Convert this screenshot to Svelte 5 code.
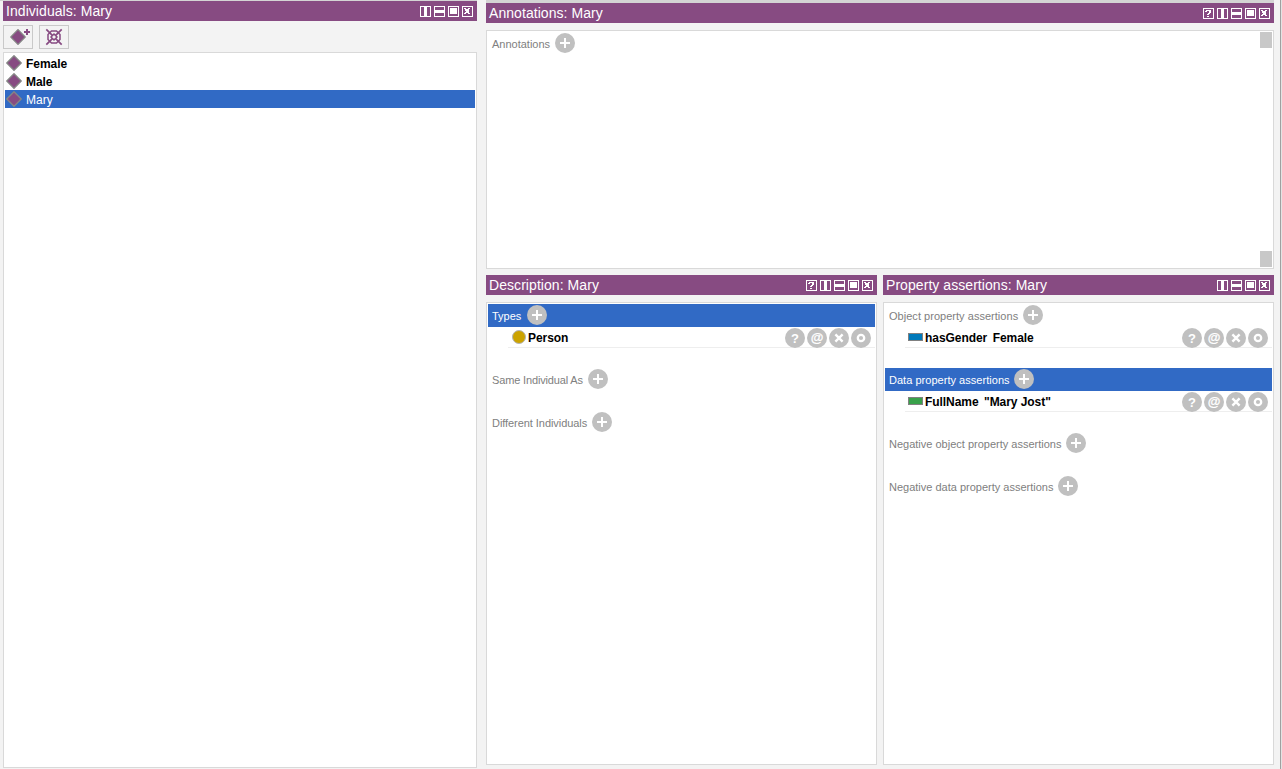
<script>
  const people = [
    { name: 'Female', bold: true },
    { name: 'Male', bold: true },
    { name: 'Mary', selected: true }
  ];
  const description = [
    { label: 'Types', width: 35, selected: true, item: { kind: 'class', name: 'Person' } },
    { label: 'Same Individual As', width: 96, spacing: -0.15 },
    { label: 'Different Individuals', width: 100, spacing: -0.06 }
  ];
  const assertions = [
    { label: 'Object property assertions', width: 134, spacing: 0.03, item: { kind: 'object', name: 'hasGender', value: 'Female' } },
    { label: 'Data property assertions', width: 125, spacing: 0.03, selected: true, item: { kind: 'data', name: 'FullName', value: '"Mary Jost"' } },
    { label: 'Negative object property assertions', width: 177 },
    { label: 'Negative data property assertions', width: 169 }
  ];
</script>

{#snippet header(title, help)}
  <header>
    <h2>{title}</h2>
    <div class="controls">
      {#each help ? ['help', 'cols', 'rows', 'max', 'close'] : ['cols', 'rows', 'max', 'close'] as kind}
        <svg width="11" height="11" viewBox="0 0 11 11" shape-rendering="crispEdges">
          <rect x=".5" y=".5" width="10" height="10" fill="none" stroke="#fff" />
          {#if kind === 'help'}
            <path d="M3 2h5v1h-5zM2 3h2v1h-2zM6 3h2v2h-2zM5 5h2v1h-2zM4 6h2v1h-2zM4 8h2v1h-2z" fill="#fff" />
          {:else if kind === 'cols'}
            <rect x="4" y="1" width="3" height="9" fill="#fff" />
          {:else if kind === 'rows'}
            <rect x="1" y="4" width="9" height="3" fill="#fff" />
          {:else if kind === 'max'}
            <rect x="2" y="2" width="7" height="6" fill="#fff" />
          {:else}
            <path d="M2 2h2v1h-2zM6 2h2v1h-2zM3 3h4v1h-4zM3 4h4v1h-4zM4 5h3v1h-3zM3 6h4v1h-4zM2 7h2v1h-2zM6 7h2v1h-2z" fill="#fff" />
          {/if}
        </svg>
      {/each}
    </div>
  </header>
{/snippet}

{#snippet round(kind)}
  <svg width="20" height="20" viewBox="0 0 20 20">
    <circle cx="10" cy="10" r="10" fill="#c0c0c0" />
    {#if kind === 'add'}
      <path d="M5 10h10M10 5v10" stroke="#fff" stroke-width="2" />
    {:else if kind === 'help'}
      <text x="10" y="15" text-anchor="middle" font-size="13" font-weight="bold" fill="#fff">?</text>
    {:else if kind === 'at'}
      <text x="10" y="14" text-anchor="middle" font-size="13" fill="#fff" stroke="#fff" stroke-width=".2">@</text>
    {:else if kind === 'delete'}
      <path d="M6.4 6.4l7.2 7.2M13.6 6.4l-7.2 7.2" stroke="#fff" stroke-width="2.4" />
    {:else}
      <circle cx="10" cy="10" r="3.2" fill="none" stroke="#fff" stroke-width="2.3" />
    {/if}
  </svg>
{/snippet}

{#snippet diamond()}
  <svg width="16" height="16" viewBox="0 0 16 16">
    <path d="M8 .8L15.2 8 8 15.2.8 8z" fill="#874b82" stroke="#858585" stroke-width="1.4" stroke-linejoin="round" />
  </svg>
{/snippet}

{#snippet sections(list)}
  {#each list as s}
    <section>
      <div class="heading" class:selected={s.selected}>
        <span class="label" style:width="{s.width}px" style:letter-spacing="{s.spacing ?? 0}px">{s.label}</span>
        {@render round('add')}
      </div>
      {#if s.item}
        <div class="item">
          {#if s.item.kind === 'class'}
            <svg width="20" height="16"><circle cx="11" cy="8" r="6.5" fill="#cca300" stroke="#b4b4b4" /></svg>
          {:else}
            <svg width="20" height="16">
              <rect x="3.5" y="4.5" width="14" height="7" fill={s.item.kind === 'object' ? '#0079ba' : '#38a14a'} stroke="#808080" />
            </svg>
          {/if}
          <span class="name">{s.item.name}</span>
          {#if s.item.value}<span class="value">{s.item.value}</span>{/if}
          <div class="actions">
            {#each ['help', 'at', 'delete', 'edit'] as kind}{@render round(kind)}{/each}
          </div>
        </div>
      {/if}
    </section>
  {/each}
{/snippet}

<div class="window">
  <div class="left">
    {@render header('Individuals: Mary', false)}
    <div class="toolbar">
      <button aria-label="Add individual">
        <svg width="28" height="22" viewBox="0 0 28 22">
          <path d="M14 3.6L21.2 11 14 18.4 6.8 11z" fill="#874b82" stroke="#858585" stroke-width="1.3" stroke-linejoin="round" />
          <path d="M20 6h6M23 3v6" stroke="#874b82" stroke-width="2" />
        </svg>
      </button>
      <button aria-label="Delete individual">
        <svg width="28" height="22" viewBox="0 0 28 22" fill="none" stroke="#874b82">
          <path d="M6.3 3.3l15.4 15.4M21.7 3.3l-15.4 15.4" stroke-width="1.7" />
          <path d="M11.5 5h5L20 8.5v5L16.5 17h-5L8 13.500v-5z" stroke-width="1.5" />
          <path d="M14 8L17 11 14 14 11 11z" fill="#f3f3f3" stroke-width="1.5" />
        </svg>
      </button>
    </div>
    <div class="box list">
      {#each people as p}
        <div class="person" class:bold={p.bold} class:selected={p.selected}>
          {@render diamond()}<span>{p.name}</span>
        </div>
      {/each}
    </div>
  </div>

  <div class="right">
    <div class="pane annotations">
      {@render header('Annotations: Mary', true)}
      <div class="box scroller">
        <div class="grow">{@render sections([{ label: 'Annotations', width: 63 }])}</div>
        <div class="scrollbar"><i></i><i></i></div>
      </div>
    </div>
    <div class="bottom">
      <div class="pane">
        {@render header('Description: Mary', true)}
        <div class="box">{@render sections(description)}</div>
      </div>
      <div class="pane">
        {@render header('Property assertions: Mary', false)}
        <div class="box">{@render sections(assertions)}</div>
      </div>
    </div>
  </div>
  <div class="edge"></div>
</div>

<style>
  :global(body) { margin: 0; }
  .window {
    box-sizing: border-box; width: 1282px; height: 769px; overflow: hidden;
    display: flex; background: #f3f3f3; color: #000;
    font-family: "Liberation Sans", Arial, sans-serif; font-size: 12px;
  }
  svg { display: block; flex: none; }
  .left { width: 474px; height: 767px; padding: 0 0 1px 3px; display: flex; flex-direction: column; border-top: 1px solid #d4d4d4; }
  .right { margin-left: 9px; width: 788px; height: 762px; border-top: 3px solid #d4d4d4; display: flex; flex-direction: column; }
  .edge { margin-left: 6px; width: 1px; background: #a0a0a0; border-right: 1px solid #e3e3e3; }
  header { height: 20px; flex: none; background: #874b82; display: flex; justify-content: space-between; padding: 0 4px 0 3px; }
  h2 { margin: 0; font-size: 14px; font-weight: normal; line-height: 20px; color: #fff; letter-spacing: .06px; white-space: nowrap; }
  .controls { display: flex; gap: 3px; padding-top: 5px; }
  .toolbar { height: 27px; padding-top: 4px; display: flex; gap: 6px; }
  button { box-sizing: border-box; width: 30px; height: 24px; padding: 0; border: 1px solid #c9c9c9; background: #f3f3f3; }
  .box { box-sizing: border-box; flex: 1; min-height: 0; border: 1px solid #d9d9d9; background: #fff; padding: 1px; }
  .pane { display: flex; flex-direction: column; gap: 7px; min-width: 0; }
  .annotations { height: 266px; flex: none; }
  .bottom { margin-top: 6px; flex: 1; display: grid; grid-template-columns: 391px 391px; gap: 6px; }
  .person { height: 18px; display: flex; align-items: center; gap: 4px; padding-left: 1px; }
  .person span { line-height: 16px; padding-top: 2px; }
  .bold { font-weight: bold; }
  .bold span { letter-spacing: -.05px; }
  .selected { background: #316ac5; }
  .person.selected, .heading.selected .label { color: #fff; }
  .scroller { display: flex; }
  .grow { flex: 1; }
  .scrollbar { width: 12px; display: flex; flex-direction: column; justify-content: space-between; }
  .scrollbar i { height: 16px; background: #c8c8c8; }
  section + section { margin-top: 20px; }
  .heading { height: 23px; box-sizing: border-box; padding: 1px 0 0 4px; display: flex; }
  .label { font-size: 11px; line-height: 22px; color: #808080; white-space: nowrap; }
  .item { height: 21px; box-sizing: border-box; margin-left: 20px; padding-bottom: 1px; display: flex; align-items: center; font-weight: bold; white-space: nowrap; background: linear-gradient(#eee, #eee) bottom / 100% 1px no-repeat; }
  .name, .value { line-height: 18px; padding-top: 2px; letter-spacing: -.06px; }
  .value { margin-left: 5.5px; }
  .actions { display: flex; gap: 2px; margin: 1px 4px 0 auto; align-self: flex-start; }
</style>
